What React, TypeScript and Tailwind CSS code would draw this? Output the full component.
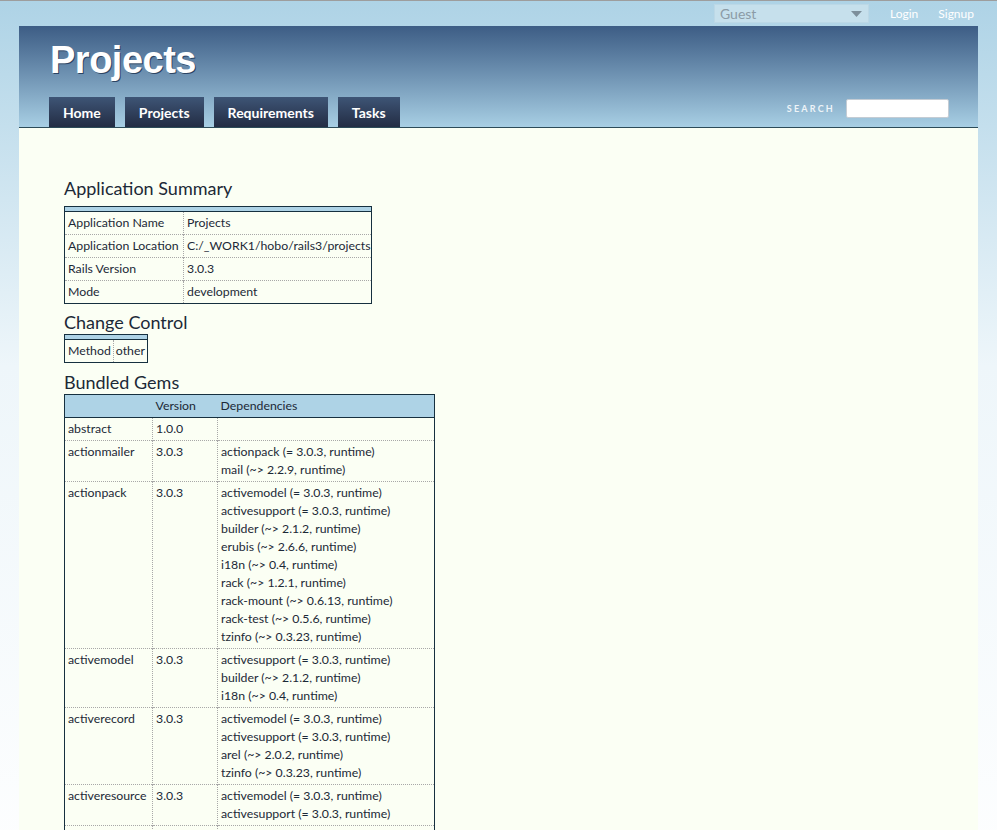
import React from "react";

/* Hobo app "About" page: summary, change control and the bundled gems list. */

const summary = [
  ["Application Name", "Projects"],
  ["Application Location", "C:/_WORK1/hobo/rails3/projects"],
  ["Rails Version", "3.0.3"],
  ["Mode", "development"],
];

const gems: { name: string; version: string; deps: string[] }[] = [
  { name: "abstract", version: "1.0.0", deps: [] },
  {
    name: "actionmailer",
    version: "3.0.3",
    deps: ["actionpack (= 3.0.3, runtime)", "mail (~> 2.2.9, runtime)"],
  },
  {
    name: "actionpack",
    version: "3.0.3",
    deps: [
      "activemodel (= 3.0.3, runtime)",
      "activesupport (= 3.0.3, runtime)",
      "builder (~> 2.1.2, runtime)",
      "erubis (~> 2.6.6, runtime)",
      "i18n (~> 0.4, runtime)",
      "rack (~> 1.2.1, runtime)",
      "rack-mount (~> 0.6.13, runtime)",
      "rack-test (~> 0.5.6, runtime)",
      "tzinfo (~> 0.3.23, runtime)",
    ],
  },
  {
    name: "activemodel",
    version: "3.0.3",
    deps: ["activesupport (= 3.0.3, runtime)", "builder (~> 2.1.2, runtime)", "i18n (~> 0.4, runtime)"],
  },
  {
    name: "activerecord",
    version: "3.0.3",
    deps: [
      "activemodel (= 3.0.3, runtime)",
      "activesupport (= 3.0.3, runtime)",
      "arel (~> 2.0.2, runtime)",
      "tzinfo (~> 0.3.23, runtime)",
    ],
  },
  {
    name: "activeresource",
    version: "3.0.3",
    deps: ["activemodel (= 3.0.3, runtime)", "activesupport (= 3.0.3, runtime)"],
  },
  { name: "activesupport", version: "3.0.3", deps: [] },
  { name: "arel", version: "2.0.6", deps: ["activesupport (>= 3.0.0, runtime)"] },
];

const nav = ["Home", "Projects", "Requirements", "Tasks"];

const cell =
  "px-[3px] py-[2px] align-top leading-[18px] whitespace-nowrap border-t border-dotted border-[#a8a8a8]";
const vline = "border-l border-dotted border-[#a8a8a8]";

function Band({ cols }: { cols: number }) {
  return (
    <thead>
      <tr>
        <th colSpan={cols} className="h-[5px] p-0 bg-[#aed3e6] border-b border-[#16303f]" />
      </tr>
    </thead>
  );
}

export default function App() {
  return (
    <div className="min-h-[830px] border-t border-[#9d9d9d] bg-gradient-to-b from-[#aed3e6] via-[#eef6fa] via-40% to-white font-['Lato',sans-serif] text-[12.3px] text-[#1c2937]">
      {/* account bar */}
      <div className="w-[959px] ml-[19px] h-[25px] flex items-center justify-end text-[12px]">
        <div className="w-[155px] h-[19px] mr-[21px] flex items-center justify-between pl-[5px] pr-[6px] bg-[#c6e0ec] border border-[#bcd8e6] text-[14px] text-[#8b9ba6]">
          <span>Guest</span>
          <svg width="11" height="6" viewBox="0 0 11 6">
            <path d="M0 0h11L5.5 6z" fill="#7d8f9b" />
          </svg>
        </div>
        <a className="text-white mr-[20px]">Login</a>
        <a className="text-white mr-[4px]">Signup</a>
      </div>

      <div className="w-[959px] ml-[19px]">
        {/* header */}
        <header className="h-[102px] bg-gradient-to-b from-[#3d5d85] to-[#a8cfe4] border-b border-[#2c4b58] flex flex-col">
          <h1 className="ml-[31px] mt-[12px] font-['Liberation_Sans',sans-serif] font-bold text-[38px] leading-[44px] tracking-[-0.5px] text-white [text-shadow:1px_1px_0_#2c4463]">
            Projects
          </h1>
          <div className="mt-auto flex items-end justify-between pl-[30px] pr-[29px]">
            <nav className="flex gap-[10px]">
              {nav.map((n) => (
                <a
                  key={n}
                  className="h-[30px] px-[14px] flex items-center bg-gradient-to-b from-[#3e5576] to-[#232d44] text-white font-bold text-[14px]"
                >
                  {n}
                </a>
              ))}
            </nav>
            <div className="flex items-center gap-[11px] mb-[9px]">
              <span className="text-[9px] font-bold tracking-[2.2px] text-[#eef4f8]">SEARCH</span>
              <input className="w-[103px] h-[19px] bg-white border border-[#c4ccd4] rounded-[2px]" />
            </div>
          </div>
        </header>

        {/* content */}
        <main className="bg-[#fbfff4] pt-[49px] pl-[45px] pb-[40px]">
          <h2 className="text-[18px] leading-[22px] mb-[7px]">Application Summary</h2>
          <table className="border-collapse border border-[#16303f] table-fixed w-[308px] mb-[7px]">
            <colgroup>
              <col className="w-[119px]" />
              <col />
            </colgroup>
            <Band cols={2} />
            <tbody>
              {summary.map(([k, v], i) => (
                <tr key={k}>
                  <td className={`${cell} ${i === 0 ? "border-t-0" : ""}`}>{k}</td>
                  <td className={`${cell} ${vline} ${i === 0 ? "border-t-0" : ""}`}>{v}</td>
                </tr>
              ))}
            </tbody>
          </table>

          <h2 className="text-[18px] leading-[22px] mb-[1px]">Change Control</h2>
          <table className="border-collapse border border-[#16303f] mb-[8px]">
            <Band cols={2} />
            <tbody>
              <tr>
                <td className={`${cell} pr-[2px] border-t-0`}>Method</td>
                <td className={`${cell} ${vline} pl-[2px] pr-[2px] border-t-0`}>other</td>
              </tr>
            </tbody>
          </table>

          <h2 className="text-[18px] leading-[22px] mb-[1px]">Bundled Gems</h2>
          <table className="border-collapse border border-[#16303f] table-fixed w-[371px]">
            <colgroup>
              <col className="w-[88px]" />
              <col className="w-[65px]" />
              <col />
            </colgroup>
            <thead>
              <tr className="bg-[#aed3e6] border-b border-[#16303f]">
                <th className="px-[3px] py-[2px] font-normal text-left leading-[18px]" />
                <th className="px-[3px] py-[2px] font-normal text-left leading-[18px]">Version</th>
                <th className="px-[3px] py-[2px] font-normal text-left leading-[18px]">Dependencies</th>
              </tr>
            </thead>
            <tbody>
              {gems.map((g, i) => (
                <tr key={g.name}>
                  <td className={`${cell} ${i === 0 ? "border-t-0" : ""}`}>{g.name}</td>
                  <td className={`${cell} ${vline} ${i === 0 ? "border-t-0" : ""}`}>{g.version}</td>
                  <td className={`${cell} ${vline} ${i === 0 ? "border-t-0" : ""}`}>
                    {g.deps.length ? g.deps.map((d) => <div key={d}>{d}</div>) : <div>&nbsp;</div>}
                  </td>
                </tr>
              ))}
            </tbody>
          </table>
        </main>
      </div>
    </div>
  );
}
